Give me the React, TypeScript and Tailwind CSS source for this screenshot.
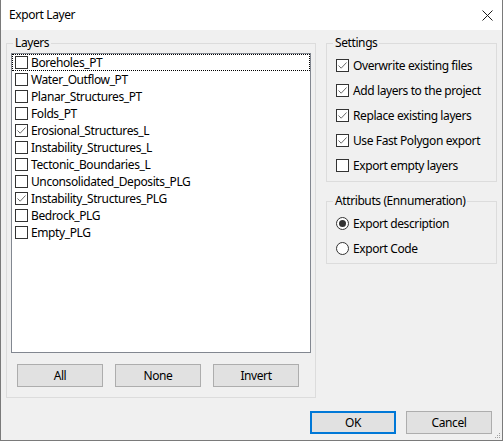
import React from "react";

const layers = [
  { name: "Boreholes_PT", checked: false },
  { name: "Water_Outflow_PT", checked: false },
  { name: "Planar_Structures_PT", checked: false },
  { name: "Folds_PT", checked: false },
  { name: "Erosional_Structures_L", checked: true },
  { name: "Instability_Structures_L", checked: false },
  { name: "Tectonic_Boundaries_L", checked: false },
  { name: "Unconsolidated_Deposits_PLG", checked: false },
  { name: "Instability_Structures_PLG", checked: true },
  { name: "Bedrock_PLG", checked: false },
  { name: "Empty_PLG", checked: false },
];

const settings = [
  { label: "Overwrite existing files", checked: true },
  { label: "Add layers to the project", checked: true },
  { label: "Replace existing layers", checked: true },
  { label: "Use Fast Polygon export", checked: true },
  { label: "Export empty layers", checked: false },
];

function CheckBox({ checked }: { checked: boolean }) {
  return (
    <span className="flex h-[13px] w-[13px] shrink-0 items-center justify-center border border-[#333333] bg-white">
      {checked && (
        <svg width="11" height="11" viewBox="0 0 11 11">
          <path d="M1.5 5.5 L4.2 8.2 L9.5 2.5" fill="none" stroke="#6b6b6b" strokeWidth="1" />
        </svg>
      )}
    </span>
  );
}

function Radio({ checked }: { checked: boolean }) {
  return (
    <span className="flex h-[13px] w-[13px] shrink-0 items-center justify-center rounded-full border border-[#333333] bg-white">
      {checked && <span className="h-[7px] w-[7px] rounded-full bg-[#333333]" />}
    </span>
  );
}

function GroupBox({
  title,
  className,
  children,
}: {
  title: string;
  className: string;
  children: React.ReactNode;
}) {
  return (
    <div className={`relative border border-[#dcdcdc] ${className}`}>
      <span className="absolute top-[-9px] left-[6px] bg-[#f0f0f0] px-[2px] leading-[16px]">
        {title}
      </span>
      {children}
    </div>
  );
}

function Button({ label, primary }: { label: string; primary?: boolean }) {
  return (
    <button
      className={`h-[23px] w-[86px] bg-[#e1e1e1] text-[12px] leading-none text-black ${
        primary ? "border-2 border-[#0078d7]" : "border border-[#adadad]"
      }`}
    >
      {label}
    </button>
  );
}

export default function App() {
  return (
    <div
      className="flex h-[441px] w-[503px] flex-col border-x border-b border-[#7a7a7a] bg-[#f0f0f0] text-[12px] tracking-[-0.4px] text-black"
      style={{ fontFamily: '"Noto Sans", "Liberation Sans", sans-serif' }}
    >
      <div className="flex h-[30px] shrink-0 items-center justify-between bg-white pr-[9px] pl-[8px]">
        <span className="leading-[16px]">Export Layer</span>
        <svg width="11" height="11" viewBox="0 0 11 11">
          <path d="M0.5 0.5 L10.5 10.5 M10.5 0.5 L0.5 10.5" stroke="#1a1a1a" strokeWidth="1" />
        </svg>
      </div>

      <div className="flex gap-[10px] pt-[13px] pl-[5px]">
        <GroupBox title="Layers" className="h-[355px] w-[310px] px-[4px] pt-[9px]">
          <div className="h-[300px] border border-[#828790] bg-white">
            {layers.map((l, i) => (
              <div
                key={l.name}
                className={`flex h-[17px] items-center gap-[3px] pl-[2px] leading-[16px] ${
                  i === 0 ? "border border-dotted border-black" : "border border-transparent"
                }`}
              >
                <CheckBox checked={l.checked} />
                <span>{l.name}</span>
              </div>
            ))}
          </div>
          <div className="mt-[11px] flex gap-[12px] pl-[6px]">
            <Button label="All" />
            <Button label="None" />
            <Button label="Invert" />
          </div>
        </GroupBox>

        <div className="flex w-[171px] flex-col gap-[19px]">
          <GroupBox title="Settings" className="flex h-[139px] flex-col gap-[8px] pt-[13px] pl-[9px]">
            {settings.map((s) => (
              <div key={s.label} className="flex h-[17px] items-center gap-[4px] leading-[16px]">
                <CheckBox checked={s.checked} />
                <span>{s.label}</span>
              </div>
            ))}
          </GroupBox>
          <GroupBox
            title="Attributs (Ennumeration)"
            className="flex h-[63px] flex-col gap-[8px] pt-[13px] pl-[9px]"
          >
            <div className="flex h-[17px] items-center gap-[4px] leading-[16px]">
              <Radio checked />
              <span>Export description</span>
            </div>
            <div className="flex h-[17px] items-center gap-[4px] leading-[16px]">
              <Radio checked={false} />
              <span>Export Code</span>
            </div>
          </GroupBox>
        </div>
      </div>

      <div className="relative mt-[13px] flex justify-end gap-[10px] pr-[10px]">
        <Button label="OK" primary />
        <Button label="Cancel" />
        <svg className="absolute right-[1px] bottom-[-5px]" width="7" height="7" viewBox="0 0 7 7">
          <rect x="5" y="1" width="1" height="1" fill="#a0a0a0" />
          <rect x="3" y="3" width="1" height="1" fill="#a0a0a0" />
          <rect x="5" y="3" width="1" height="1" fill="#a0a0a0" />
          <rect x="1" y="5" width="1" height="1" fill="#a0a0a0" />
          <rect x="3" y="5" width="1" height="1" fill="#a0a0a0" />
          <rect x="5" y="5" width="1" height="1" fill="#a0a0a0" />
        </svg>
      </div>
    </div>
  );
}
